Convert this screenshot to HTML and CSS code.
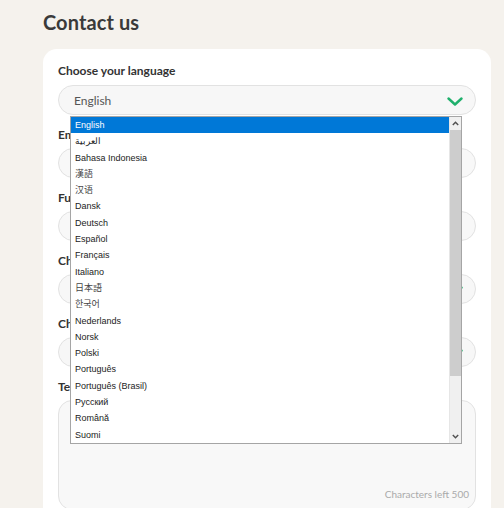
FILE: index.html
```html
<!DOCTYPE html>
<html lang="en">
<head>
<meta charset="utf-8">
<title>Contact us</title>
<link rel="stylesheet" href="styles.css">
</head>
<body>
<main class="page">
  <h1 class="title">Contact us</h1>
  <section class="card">
    <div class="field">
      <label class="label">Choose your language</label>
      <div class="select-wrap">
        <div class="select">
          <span class="select-value">English</span>
          <svg class="chevron" width="16" height="9" viewBox="0 0 16 9"><path d="M1.5 1.5 L8 7.5 L14.5 1.5" fill="none" stroke="#1fb06c" stroke-width="2.4" stroke-linecap="round" stroke-linejoin="round"/></svg>
        </div>
        <div class="listbox">
          <ul class="options">
            <li class="option selected">English</li>
            <li class="option" lang="ar">العربية</li>
            <li class="option">Bahasa Indonesia</li>
            <li class="option cjk" lang="zh-Hant">漢語</li>
            <li class="option cjk" lang="zh-Hans">汉语</li>
            <li class="option">Dansk</li>
            <li class="option">Deutsch</li>
            <li class="option">Español</li>
            <li class="option">Français</li>
            <li class="option">Italiano</li>
            <li class="option cjk" lang="ja">日本語</li>
            <li class="option cjk" lang="ko">한국어</li>
            <li class="option">Nederlands</li>
            <li class="option">Norsk</li>
            <li class="option">Polski</li>
            <li class="option">Português</li>
            <li class="option">Português (Brasil)</li>
            <li class="option">Русский</li>
            <li class="option">Română</li>
            <li class="option">Suomi</li>
          </ul>
          <div class="scrollbar">
            <div class="sb-btn"><svg width="7" height="5" viewBox="0 0 7 5"><path d="M0.8 4 L3.5 1.2 L6.2 4" fill="none" stroke="#505050" stroke-width="1.4"/></svg></div>
            <div class="sb-track"><div class="sb-thumb"></div></div>
            <div class="sb-btn"><svg width="7" height="5" viewBox="0 0 7 5"><path d="M0.8 1 L3.5 3.8 L6.2 1" fill="none" stroke="#505050" stroke-width="1.4"/></svg></div>
          </div>
        </div>
      </div>
    </div>
    <div class="field">
      <label class="label">Email address</label>
      <div class="input"></div>
    </div>
    <div class="field">
      <label class="label">Full name</label>
      <div class="input"></div>
    </div>
    <div class="field">
      <label class="label">Choose your country</label>
      <div class="select">
        <span class="select-value"></span>
        <svg class="chevron" width="16" height="9" viewBox="0 0 16 9"><path d="M1.5 1.5 L8 7.5 L14.5 1.5" fill="none" stroke="#1fb06c" stroke-width="2.4" stroke-linecap="round" stroke-linejoin="round"/></svg>
      </div>
    </div>
    <div class="field">
      <label class="label">Choose a topic</label>
      <div class="select">
        <span class="select-value"></span>
        <svg class="chevron" width="16" height="9" viewBox="0 0 16 9"><path d="M1.5 1.5 L8 7.5 L14.5 1.5" fill="none" stroke="#1fb06c" stroke-width="2.4" stroke-linecap="round" stroke-linejoin="round"/></svg>
      </div>
    </div>
    <div class="field">
      <label class="label">Tell us how we can help</label>
      <div class="textarea">
        <span class="counter">Characters left 500</span>
      </div>
    </div>
  </section>
</main>
</body>
</html>
```

FILE: styles.css
```css
* { box-sizing: border-box; }

html, body {
  margin: 0;
  padding: 0;
  height: 100%;
  overflow: hidden;
}

body {
  background: #f5f2ed;
  font-family: Lato, "Noto Sans", sans-serif;
  color: #333;
}

.page {
  padding: 8px 13px 0 43px;
}

.title {
  margin: 0;
  font-size: 20px;
  line-height: 28px;
  font-weight: 700;
  color: #3a3a3a;
  letter-spacing: 0.1px;
}

.card {
  margin-top: 13px;
  background: #fff;
  border-radius: 14px;
  padding: 15px 15px 40px;
  display: flex;
  flex-direction: column;
  gap: 13px;
}

.field {
  display: flex;
  flex-direction: column;
  gap: 6px;
}

.field:first-child {
  gap: 7px;
}

.label {
  font-size: 12px;
  line-height: 14px;
  font-weight: 700;
  color: #333;
}

.select-wrap {
  position: relative;
}

.select {
  height: 30px;
  border: 1px solid #e2e2e2;
  background: #f7f7f7;
  border-radius: 15px;
  display: flex;
  align-items: center;
  justify-content: space-between;
  padding: 0 12px 0 15px;
}

.select-value {
  font-size: 12px;
  color: #555;
}

.chevron {
  display: block;
  margin-top: 2px;
}

.input {
  height: 30px;
  border: 1px solid #e2e2e2;
  background: #f8f8f8;
  border-radius: 15px;
}

.textarea {
  height: 110px;
  border: 1px solid #e2e2e2;
  background: #f8f8f8;
  border-radius: 14px;
  display: flex;
  align-items: flex-end;
  justify-content: flex-end;
  padding: 0 6px 9px 0;
}

.counter {
  font-size: 10px;
  line-height: 12px;
  color: #aaa;
}

/* open native dropdown */
.listbox {
  position: absolute;
  left: 12px;
  top: 31px;
  width: 392px;
  height: 328px;
  border: 1px solid #a5a5a5;
  background: #fff;
  display: flex;
  z-index: 10;
}

.options {
  list-style: none;
  margin: 0;
  padding: 0;
  flex: 1;
  font-family: "Liberation Sans", Arial, "Noto Sans CJK SC", sans-serif;
  font-size: 9px;
  color: #222;
}

.option {
  height: 16.3px;
  line-height: 16.3px;
  padding-left: 4px;
  white-space: nowrap;
}

.option.cjk {
  font-family: "Noto Sans CJK JP", "Noto Sans CJK KR", sans-serif;
  font-size: 9px;
  color: #444;
}

.option[lang="ko"] {
  font-family: "Noto Sans CJK KR", sans-serif;
}

.option[lang="zh-Hans"] {
  font-family: "Noto Sans CJK SC", sans-serif;
}

.option[lang="zh-Hant"] {
  font-family: "Noto Sans CJK TC", sans-serif;
}

.option.selected {
  background: #0078d7;
  color: #fff;
}

.scrollbar {
  width: 12px;
  display: flex;
  flex-direction: column;
  background: #f0f0f0;
  border-left: 1px solid #e6e6e6;
}

.sb-btn {
  height: 13px;
  display: flex;
  align-items: center;
  justify-content: center;
}

.sb-track {
  flex: 1;
  padding: 0 0 54px;
}

.sb-thumb {
  height: 100%;
  background: #cdcdcd;
}
```
